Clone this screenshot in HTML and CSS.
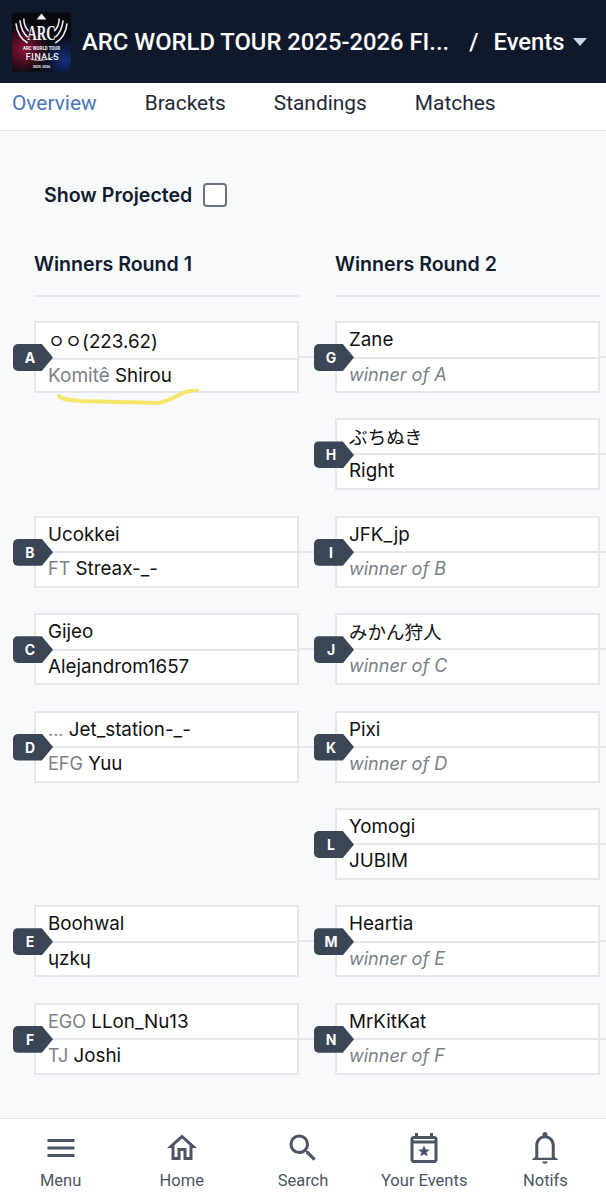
FILE: index.html
```html
<!DOCTYPE html>
<html lang="en">
<head>
<meta charset="utf-8">
<title>ARC WORLD TOUR 2025-2026 FINALS</title>
<link rel="stylesheet" href="styles.css">
</head>
<body>
<div class="app">
  <header class="topbar">
    <svg class="logo" viewBox="0 0 60 60" aria-hidden="true">
      <defs>
        <radialGradient id="red" cx="0.2" cy="0.62" r="0.42">
          <stop offset="0" stop-color="#8f1236"/>
          <stop offset="1" stop-color="#8f1236" stop-opacity="0"/>
        </radialGradient>
        <radialGradient id="blue" cx="0.9" cy="0.8" r="0.42">
          <stop offset="0" stop-color="#12307c"/>
          <stop offset="1" stop-color="#12307c" stop-opacity="0"/>
        </radialGradient>
      </defs>
      <rect width="60" height="60" rx="3" fill="#08090f"/>
      <rect width="60" height="60" rx="3" fill="url(#red)"/>
      <rect width="60" height="60" rx="3" fill="url(#blue)"/>
      <path d="M4 11c1 9 5 16 12 20M8 8c1 8 3 13 8 17M12 6c0 6 2 10 5 13M56 11c-1 9-5 16-12 20M52 8c-1 8-3 13-8 17M48 6c0 6-2 10-5 13" fill="none" stroke="#e9e9ee" stroke-width="1.600"/>
      <path d="M30 1l5 6H25z" fill="#f1f1f4"/>
      <text class="logo-arc" transform="translate(30 28) scale(1 1.6)" text-anchor="middle">ARC</text>
      <text class="logo-small" x="30" y="38" text-anchor="middle">ARC WORLD TOUR</text>
      <text class="logo-finals" x="31" y="48" text-anchor="middle">FINALS</text>
      <path d="M18 47c8 3 18 2 26-3" fill="none" stroke="#f1f1f4" stroke-width="0.800"/>
      <text class="logo-tiny" x="30" y="56" text-anchor="middle">2025-2026</text>
    </svg>
    <div class="event-name">ARC WORLD TOUR 2025-2026 FI...</div>
    <div class="crumb"><span class="slash">/</span><span>Events</span><span class="caret"></span></div>
  </header>

  <nav class="tabs">
    <a class="tab active">Overview</a>
    <a class="tab">Brackets</a>
    <a class="tab">Standings</a>
    <a class="tab">Matches</a>
  </nav>

  <main class="content">
    <label class="projected">Show Projected <span class="box"></span></label>

    <div class="headings">
      <h2 class="round">Winners Round 1</h2>
      <h2 class="round">Winners Round 2</h2>
    </div>

    <div class="bracket">
      <div class="match"><span class="tag">A</span><div class="slot"><span class="cjk">ㅇㅇ</span>(223.62)</div><div class="slot"><span class="team long">Komitê</span> Shirou</div></div>
      <div class="match"><span class="tag">G</span><div class="slot">Zane</div><div class="slot pending">winner of A</div></div>

      <div class="empty"></div>
      <div class="match"><span class="tag">H</span><div class="slot cjk">ぶちぬき</div><div class="slot">Right</div></div>

      <div class="match"><span class="tag">B</span><div class="slot">Ucokkei</div><div class="slot"><span class="team">FT</span> Streax-_-</div></div>
      <div class="match"><span class="tag">I</span><div class="slot">JFK_jp</div><div class="slot pending">winner of B</div></div>

      <div class="match"><span class="tag">C</span><div class="slot">Gijeo</div><div class="slot">Alejandrom1657</div></div>
      <div class="match"><span class="tag">J</span><div class="slot cjk">みかん狩人</div><div class="slot pending">winner of C</div></div>

      <div class="match"><span class="tag">D</span><div class="slot"><span class="team">...</span> Jet_station-_-</div><div class="slot"><span class="team">EFG</span> Yuu</div></div>
      <div class="match"><span class="tag">K</span><div class="slot">Pixi</div><div class="slot pending">winner of D</div></div>

      <div class="empty"></div>
      <div class="match"><span class="tag">L</span><div class="slot">Yomogi</div><div class="slot">JUBIM</div></div>

      <div class="match"><span class="tag">E</span><div class="slot">Boohwal</div><div class="slot">ɥzkɥ</div></div>
      <div class="match"><span class="tag">M</span><div class="slot">Heartia</div><div class="slot pending">winner of E</div></div>

      <div class="match"><span class="tag">F</span><div class="slot"><span class="team">EGO</span> LLon_Nu13</div><div class="slot"><span class="team">TJ</span> Joshi</div></div>
      <div class="match"><span class="tag">N</span><div class="slot">MrKitKat</div><div class="slot pending">winner of F</div></div>
    </div>

    <svg class="scribble" viewBox="0 0 144 20" aria-hidden="true">
      <path d="M3 7c3 4 12 4 22 5 25 1 50 1 76 2 14-1 22-10 32-12 3-1 5-1 8-1" fill="none" stroke="#f5e76b" stroke-width="4" stroke-linecap="round"/>
    </svg>
  </main>

  <footer class="bottom">
    <a class="item">
      <svg class="icon" viewBox="0 0 24 24"><path d="M3 18h18v-2H3v2zm0-5h18v-2H3v2zm0-7v2h18V6H3z"/></svg>
      <span>Menu</span>
    </a>
    <a class="item">
      <svg class="icon" viewBox="0 0 24 24"><path d="M12 5.69l5 4.5V18h-2v-6H9v6H7v-7.81l5-4.5M12 3L2 12h3v8h6v-6h2v6h6v-8h3L12 3z"/></svg>
      <span>Home</span>
    </a>
    <a class="item">
      <svg class="icon" viewBox="0 0 24 24"><path d="M15.5 14h-.79l-.28-.27A6.47 6.47 0 0 0 16 9.5 6.5 6.5 0 1 0 9.5 16c1.61 0 3.09-.59 4.23-1.57l.27.28v.79l5 4.99L20.49 19l-4.99-5zm-6 0C7.01 14 5 11.99 5 9.5S7.01 5 9.5 5 14 7.01 14 9.5 11.99 14 9.5 14z"/></svg>
      <span>Search</span>
    </a>
    <a class="item">
      <svg class="icon" viewBox="0 0 24 24"><path d="M19 4h-1V2h-2v2H8V2H6v2H5c-1.100 0-2 .9-2 2v14c0 1.100.9 2 2 2h14c1.100 0 2-.9 2-2V6c0-1.100-.9-2-2-2zm0 16H5V9h14v11zm0-13H5V6h14v1z"/><path d="M12 10.400l1.100 2.500 2.700.2-2.100 1.800.7 2.600-2.400-1.400-2.400 1.400.7-2.600-2.100-1.800 2.700-.2z"/></svg>
      <span>Your Events</span>
    </a>
    <a class="item">
      <svg class="icon" viewBox="0 0 24 24"><path d="M12 22.500c.9 0 1.700-.6 1.900-1.500h-3.800c.2.9 1 1.500 1.900 1.500zM18.500 18v-7.500c0-3.200-1.700-5.800-4.800-6.600V3c0-.9-.8-1.700-1.700-1.700s-1.700.8-1.700 1.700v.9c-3.100.8-4.800 3.400-4.800 6.600V18L3.500 19.500v.5h17v-.5L18.500 18zM16.500 18.500h-9v-8c0-2.700 1.800-5 4.500-5s4.500 2.300 4.500 5v8z"/></svg>
      <span>Notifs</span>
    </a>
  </footer>
</div>
</body>
</html>
```
FILE: styles.css
```css
* { box-sizing: border-box; }
html, body { margin: 0; height: 100%; }
body { font-family: Inter, "Noto Sans CJK JP", sans-serif; color: #111827; background: #f8f9fb; overflow: hidden; }
.app { height: 1200px; display: flex; flex-direction: column; }

.topbar { height: 83px; flex: none; background: #10192b; color: #fff; display: flex; align-items: center; padding: 0 0 0 12px; font-family: Roboto, sans-serif; font-weight: 500; font-size: 23.8px; }
.logo { width: 59px; height: 60px; flex: none; margin-right: 11px; }
.logo-arc { font: 700 13.5px "Liberation Serif", serif; fill: #f4f4f6; }
.logo-small { font: 700 4.500px Roboto, sans-serif; fill: #f1f1f4; }
.logo-finals { font: 500 9px Roboto, sans-serif; fill: #f1f1f4; letter-spacing: 0.6px; }
.logo-tiny { font: 700 3.600px Roboto, sans-serif; fill: #f1f1f4; }
.event-name { white-space: nowrap; }
.crumb { display: flex; align-items: center; margin-left: 20px; }
.slash { margin-right: 15px; }
.caret { width: 0; height: 0; margin-left: 9px; border-left: 7.500px solid transparent; border-right: 7.500px solid transparent; border-top: 8px solid #cbd5e1; }

.tabs { height: 48px; flex: none; background: #fff; border-bottom: 1px solid #e2e5ea; display: flex; align-items: flex-start; padding: 7px 0 0 12px; gap: 48px; font-family: Roboto, sans-serif; font-size: 20.9px; line-height: 26px; color: #1f2937; }
.tab.active { color: #4a76b8; }

.content { flex: 1; position: relative; padding: 51px 0 0 34px; min-height: 0; }
.projected { display: flex; align-items: center; gap: 11px; margin-left: 10px; height: 26px; font-size: 19.6px; font-weight: 600; color: #111c2e; }
.box { width: 24px; height: 24px; background: #fff; border: 2px solid #6b7280; border-radius: 4px; }

.headings { display: grid; grid-template-columns: 265px 265px; column-gap: 36px; margin-top: 41px; }
.round { margin: 0; height: 48px; padding-top: 2px; border-bottom: 2px solid #e5e7eb; font-size: 19.6px; line-height: 26px; font-weight: 600; color: #111c2e; }

.bracket { display: grid; grid-template-columns: 265px 265px; column-gap: 36px; row-gap: 25.4px; margin-top: 24px; }
.match { height: 72px; position: relative; background: #fff; border: 2px solid #e5e7eb; display: flex; flex-direction: column; }
.match::after { content: ""; position: absolute; left: 100%; top: 33px; width: 38px; height: 2px; background: #e5e7eb; }
.slot { flex: 1; padding: 0 0 0 12px; font-size: 18.8px; line-height: 32px; white-space: nowrap; color: #111; }
.slot:nth-child(2) { padding-top: 1px; }
.slot + .slot { border-top: 2px solid #e5e7eb; }
.team { color: #7b8088; font-size: 18px; }
.team.long { font-size: 19px; }
.pending { color: #7b8088; font-style: italic; font-size: 18px; }
.cjk { font-family: "Noto Sans CJK KR", "Noto Sans CJK JP", sans-serif; font-size: 18.5px; }
.slot.cjk:nth-child(2) { padding-top: 0; }
.tag { position: absolute; left: -23px; top: 21px; width: 40px; height: 27px; display: flex; align-items: center; justify-content: center; padding-right: 6px; background: #3a4556; color: #fff; font-size: 14px; font-weight: 700; border-radius: 5px; clip-path: polygon(0 0, 72% 0, 100% 50%, 72% 100%, 0 100%); z-index: 1; }
.scribble { position: absolute; left: 56px; top: 258px; width: 144px; height: 20px; }

.bottom { height: 82px; flex: none; background: #fff; border-top: 1px solid #e2e5ea; display: grid; grid-template-columns: repeat(5, 1fr); padding-top: 11px; }
.item { display: flex; flex-direction: column; align-items: center; gap: 5px; font-family: Roboto, sans-serif; font-size: 16.5px; line-height: 20px; color: #4b5563; }
.icon { width: 36px; height: 36px; fill: #4b5563; }
```
